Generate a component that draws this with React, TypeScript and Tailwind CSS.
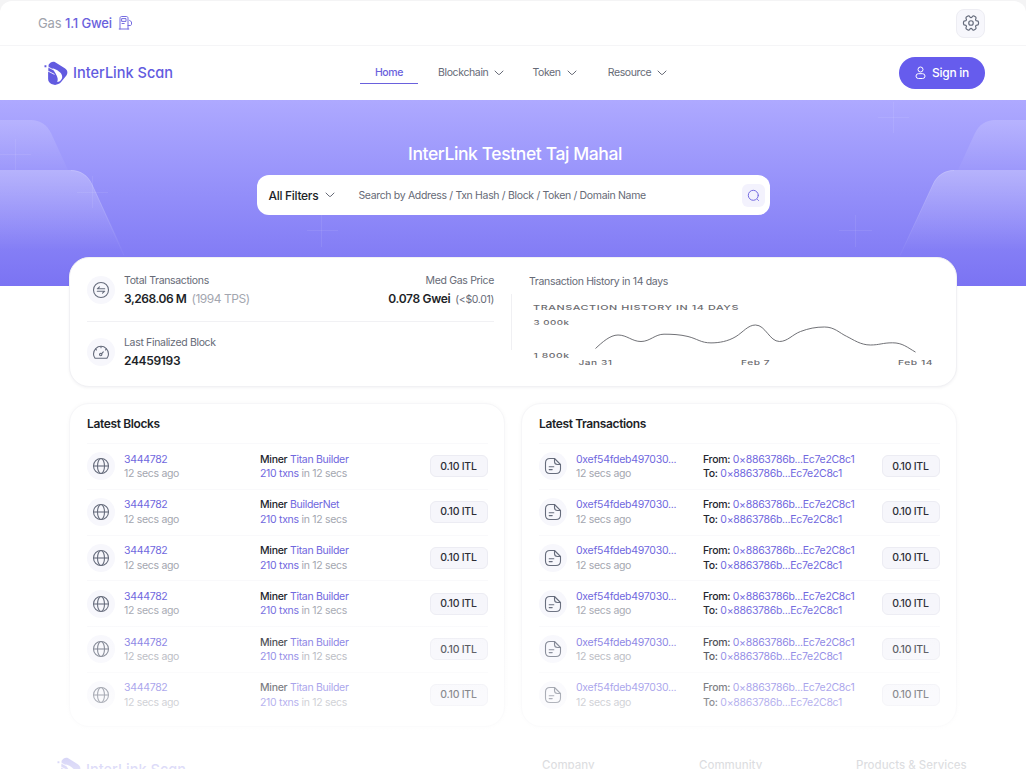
import type { ReactNode } from 'react';

const blocks = [
  { number: '3444782', miner: 'Titan Builder' },
  { number: '3444782', miner: 'BuilderNet' },
  { number: '3444782', miner: 'Titan Builder' },
  { number: '3444782', miner: 'Titan Builder' },
  { number: '3444782', miner: 'Titan Builder' },
  { number: '3444782', miner: 'Titan Builder' },
];

const transactions = Array.from({ length: 6 }, () => ({
  hash: '0xef54fdeb497030...',
  from: '0×8863786b...Ec7e2C8c1',
  to: '0×8863786b...Ec7e2C8c1',
}));

const Chevron = ({ className = '' }: { className?: string }) => (
  <svg className={className} width="10" height="6" viewBox="0 0 10 6" fill="none" stroke="currentColor" strokeLinecap="round" strokeLinejoin="round">
    <path d="M1 1l3.2 3.2c.45.45 1.15.45 1.6 0L9 1" />
  </svg>
);

const GasIcon = () => (
  <svg width="15" height="16" viewBox="0 0 15 16" fill="none" stroke="#756ce0" strokeLinecap="round" strokeLinejoin="round">
    <path d="M2 14V3.200C2 2 2.700 1.500 3.700 1.500h4.600c1 0 1.700.5 1.700 1.700V14M1.200 14h9.600" />
    <path d="M4 3.600h4v2.800H4zM4 8.500h2.200" />
    <path d="M10 10.500h2c.9 0 1.500-.4 1.500-1.300V6.800L11.600 5.500" />
  </svg>
);

const GearIcon = () => (
  <svg width="18" height="18" viewBox="0 0 24 24" fill="none" stroke="#666c7c" strokeWidth="1.600">
    <circle cx="12" cy="12" r="3" />
    <path d="M2 12.880v-1.760c0-1.040.85-1.900 1.900-1.900 1.810 0 2.550-1.280 1.640-2.850-.52-.9-.21-2.070.7-2.590l1.730-.99c.79-.47 1.810-.19 2.280.6l.11.19c.9 1.570 2.380 1.570 3.290 0l.11-.19c.47-.79 1.490-1.070 2.280-.6l1.730.99c.91.52 1.220 1.690.7 2.590-.91 1.570-.17 2.850 1.640 2.850 1.040 0 1.900.85 1.900 1.900v1.760c0 1.040-.85 1.900-1.900 1.900-1.810 0-2.550 1.280-1.640 2.850.52.91.21 2.070-.7 2.590l-1.730.99c-.79.47-1.810.19-2.280-.6l-.11-.19c-.9-1.570-2.380-1.570-3.290 0l-.11.19c-.47.79-1.490 1.070-2.280.6l-1.730-.99c-.91-.52-1.220-1.690-.7-2.590.91-1.570.17-2.850-1.640-2.850-1.050 0-1.900-.86-1.900-1.900z" />
  </svg>
);

const UserIcon = () => (
  <svg width="11" height="14" viewBox="0 0 11 14" fill="none" stroke="#fff">
    <circle cx="5.500" cy="3.500" r="2.500" />
    <rect x="1" y="7.700" width="9" height="4.800" rx="2.400" />
  </svg>
);

const SwapIcon = () => (
  <svg width="18" height="18" viewBox="0 0 18 18" fill="none" stroke="#666c7c" strokeWidth="1.100" strokeLinecap="round" strokeLinejoin="round">
    <circle cx="9" cy="9" r="7.500" />
    <path d="M12.700 7.800H5.300L7.500 5.800M5.300 10.200h7.400l-2.200 2" />
  </svg>
);

const GaugeIcon = () => (
  <svg width="18" height="18" viewBox="0 0 18 18" fill="none" stroke="#666c7c" strokeWidth="1.100" strokeLinecap="round" strokeLinejoin="round">
    <path d="M3 15.200c-.9-1.100-1.500-2.600-1.500-4.300C1.500 6.700 4.900 3.300 9 3.300s7.500 3.400 7.500 7.600c0 1.700-.6 3.200-1.500 4.300z" />
    <path d="M9 3.500v1.300M3.600 6.200l.9.800M14.400 6.200l-.9.800M11.300 8.800l-1.600 1.900" />
    <circle cx="8.700" cy="11.600" r="1.200" />
  </svg>
);

const GlobeIcon = () => (
  <svg width="18" height="18" viewBox="0 0 18 18" fill="none" stroke="#666c7c" strokeWidth="1.100">
    <circle cx="9" cy="9" r="7.500" />
    <ellipse cx="9" cy="9" rx="3.500" ry="7.500" />
    <path d="M1.500 9h15" />
  </svg>
);

const DocIcon = () => (
  <svg width="18" height="18" viewBox="0 0 18 18" fill="none" stroke="#666c7c" strokeWidth="1.100" strokeLinecap="round" strokeLinejoin="round">
    <path d="M10.500 1.500H6C3 1.500 1.500 3 1.500 6v6c0 3 1.500 4.500 4.500 4.500h6c3 0 4.500-1.500 4.500-4.500V7.500z" />
    <path d="M10.500 1.500v3c0 2.200.8 3 3 3h3M5.200 9.800h4.600M5.200 12.600h3" />
  </svg>
);

const Logo = () => (
  <div className="flex items-center text-[#625be0]">
    <svg width="25" height="25" viewBox="0 0 25 25">
      <path
        fill="currentColor"
        d="M4.600 3.800C6.300 1.300 8.800.1 11.200 1.300l9.600 5.900c2.700 1.700 3.400 4.600 1.600 7.200l-5.300 6.700c-2.400 2.900-6.500 3.500-9.600 2-2.300-1.100-3.400-3-3.400-5.300v-6z"
      />
      <path fill="#fff" d="M8.300 7.300c4.500 1.200 9.900 4.300 9.900 8.500 0 2.900-2.500 5.300-5.200 5 1.400-1.700.6-4.200-.5-6.600-1-2.200-2.800-4.500-4.200-6.900z" />
      <path fill="none" stroke="#fff" strokeWidth=".9" d="M2.700 9.400l7.800 4M3.300 5.600l6.200 3.300" />
      <path fill="currentColor" d="M.5 4.300h1.900v1.900H.5z" />
    </svg>
    <svg className="ml-[3px] overflow-visible" width="102" height="20" viewBox="0 0 102 20">
      <text
        x="1"
        y="15.300"
        textLength="100"
        lengthAdjust="spacingAndGlyphs"
        fill="currentColor"
        className="font-['Inter',sans-serif] text-[15px] font-medium [font-feature-settings:'cv11']"
      >
        InterLink Scan
      </text>
    </svg>
  </div>
);

const IconBubble = ({ children }: { children: ReactNode }) => (
  <div className="flex size-7 shrink-0 items-center justify-center rounded-full bg-[#f7f7fc]">{children}</div>
);

const Amount = () => (
  <div className="ml-auto flex h-[22px] w-[58px] items-center justify-center rounded-[6px] border border-[#ececf3] bg-[#f6f6fb] pt-px text-[10.5px] font-medium tracking-[-0.25px] text-[#2b2d35]">
    0.10 ITL
  </div>
);

const ListCard = ({ title, children }: { title: string; children: ReactNode }) => (
  <section className="h-[324px] rounded-[20px] border border-[#f6f6f8] bg-white pr-[16.500px] pl-[17px] shadow-[0_0_4px_rgba(20,20,60,0.03)]">
    <h2 className="flex h-[39px] items-center text-[12px] font-semibold tracking-[-0.37px] text-[#1d1f28]">{title}</h2>
    {children}
  </section>
);

const ListRow = ({ children }: { children: ReactNode }) => (
  <div className="flex h-[45.75px] items-center border-t border-[#f9f9fb] text-[10.5px] leading-[14.5px] tracking-[-0.3px]">{children}</div>
);

const HeroShapes = () => (
  <svg className="absolute inset-0" width="1026" height="187" viewBox="0 0 1026 187" fill="none">
    <defs>
      <linearGradient id="panel" x1="0" y1="70" x2="0" y2="150" gradientUnits="userSpaceOnUse">
        <stop stopColor="#fff" stopOpacity=".28" />
        <stop offset="1" stopColor="#fff" stopOpacity="0" />
      </linearGradient>
      <linearGradient id="backPanel" x1="0" y1="20" x2="0" y2="80" gradientUnits="userSpaceOnUse">
        <stop stopColor="#fff" stopOpacity=".17" />
        <stop offset="1" stopColor="#fff" stopOpacity="0" />
      </linearGradient>
      <linearGradient id="edge" x1="0" y1="70" x2="0" y2="155" gradientUnits="userSpaceOnUse">
        <stop stopColor="#fff" stopOpacity=".15" />
        <stop offset="1" stopColor="#fff" stopOpacity=".04" />
      </linearGradient>
    </defs>
    <path fill="url(#backPanel)" d="M0 20h31c9 0 16 5 20 13l17 37H0z" />
    <path fill="url(#panel)" d="M0 70h71c9 0 17 5 21 14l42 90H0z" />
    <path stroke="url(#edge)" d="M71 70.500c9 0 17 5 21 14l32 71" />
    <path fill="url(#backPanel)" d="M1026 20h-31c-9 0-16 5-20 13l-17 37h68z" />
    <path fill="url(#panel)" d="M1026 70h-72c-9 0-17 5-21 14l-42 90h135z" />
    <path stroke="url(#edge)" d="M954 70.500c-9 0-17 5-21 14l-33 71" />
    <g stroke="#fff" strokeOpacity=".08">
      <path d="M0 54.500h31M15.500 39v31M77 92.500h31M92.500 76v32M307 130.500h31M321.500 115v32M839 130.500h33M855.500 115v32M878 17.500h31M893.500 2v31" />
    </g>
  </svg>
);

const HistoryChart = () => (
  <svg width="410" height="72" viewBox="0 0 410 72" className="font-['Inter',sans-serif]" fill="#6b6b70">
    <g fontSize="6.6" fontWeight="500" letterSpacing=".35">
      <text x="4" y="12.300" textLength="206" lengthAdjust="spacingAndGlyphs">TRANSACTION HISTORY IN 14 DAYS</text>
      <text x="4.500" y="27.200" textLength="36" lengthAdjust="spacingAndGlyphs">3 000k</text>
      <text x="4.500" y="60.200" textLength="36" lengthAdjust="spacingAndGlyphs">1 800k</text>
      <text x="49.500" y="67.200" textLength="34" lengthAdjust="spacingAndGlyphs">Jan 31</text>
      <text x="212" y="67.200" textLength="29" lengthAdjust="spacingAndGlyphs">Feb 7</text>
      <text x="369" y="67.200" textLength="35" lengthAdjust="spacingAndGlyphs">Feb 14</text>
    </g>
    <path
      d="M66.500 50.500C73 44.500 81 37 89 37c9 0 14 6.500 23 6.500s14-7.300 23-7.300c8 0 16 .3 24 2.300 9 2.200 13 6.400 23 6.400 8 0 17-1.500 25-6.400 7-4.300 12-11.500 19.500-11.500 10 0 14 16.500 24 16.500 8 0 13-7 21-10s15-4.500 24-4.500c10 0 15 6 22 9.300 7 3.400 14 8.700 24 8.700 9 0 12-2.200 22-2.200s15 4.700 23 9.300"
      fill="none"
      stroke="#606167"
      strokeWidth=".9"
    />
  </svg>
);

export default function App() {
  return (
    <div className="relative h-[769px] w-[1026px] overflow-hidden bg-[#f4f4f5] pt-px font-['Inter',sans-serif] text-[#666a76]">
      <div className="h-[768px] overflow-hidden rounded-t-[12px] bg-white">
        {/* Gas bar */}
        <div className="flex h-[45px] items-center border-b border-[#f5f5f7] pr-[41px] pl-[38px]">
          <p className="mr-[6px] pt-px text-[13px] tracking-[-0.15px] text-[#a0a3ac]">
            Gas <span className="font-medium text-[#6a61dd]">1.1 Gwei</span>
          </p>
          <GasIcon />
          <button className="ml-auto flex size-[29px] items-center justify-center rounded-[8px] border border-[#ededf3] bg-[#f7f7fc]">
            <GearIcon />
          </button>
        </div>

        {/* Main navigation */}
        <header className="flex h-[54px] items-center pr-[41px] pl-11">
          <Logo />
          <nav className="ml-[186px] flex items-center text-[10.5px] tracking-[-0.37px]">
            <a className="flex h-[22px] w-[58px] justify-center border-b border-[#6a61dd] pt-[3px] font-medium text-[#6a61dd]">Home</a>
            <a className="ml-5 flex items-center gap-[6px]">Blockchain <Chevron /></a>
            <a className="ml-7 flex items-center gap-[6px]">Token <Chevron /></a>
            <a className="ml-[31px] flex items-center gap-[6px]">Resource <Chevron /></a>
          </nav>
          <button className="ml-auto flex h-8 w-[86px] items-center justify-center gap-[6px] rounded-full bg-[#665ced] text-[12px] font-medium tracking-[-0.3px] text-white">
            <UserIcon /> Sign in
          </button>
        </header>

        {/* Hero */}
        <section className="relative flex h-[186px] flex-col items-center bg-linear-to-b from-[#aea9ff] to-[#7b73f3]">
          <HeroShapes />
          <h1 className="relative mt-[41px] ml-[4px] text-[17.5px] leading-[26px] font-medium tracking-[-0.4px] whitespace-nowrap text-white">
            InterLink Testnet Taj Mahal
          </h1>
          <div className="relative mt-[8px] flex h-10 w-[513px] items-center rounded-[12px] bg-white pr-[5px] pl-[12px]">
            <span className="pt-[2px] text-[12px] font-medium tracking-[-0.3px] text-[#1d1f28]">All Filters</span>
            <Chevron className="ml-[7px]" />
            <span className="ml-[23px] pt-[2px] text-[10.5px] tracking-[-0.33px]">Search by Address / Txn Hash / Block / Token / Domain Name</span>
            <button className="ml-auto flex size-[23px] items-center justify-center rounded-[6px] bg-[#f3f2fd]">
              <svg width="13" height="13" viewBox="0 0 13 13" fill="none" stroke="#756ce0" strokeLinecap="round">
                <circle cx="6.300" cy="6.300" r="5" />
                <path d="M10.500 10.500l1 1" />
              </svg>
            </button>
          </div>
        </section>

        <main className="relative -mt-[29px] px-[69px]">
          {/* Network stats */}
          <section className="flex h-[130px] rounded-[20px] border border-[#f1f1f4] bg-white px-[17px] tracking-[-0.33px] shadow-[0_1px_3px_rgba(20,20,60,0.05)]">
            <div className="w-[410px]">
              <div className="flex h-16 items-center border-b border-[#f1f1f4]">
                <IconBubble><SwapIcon /></IconBubble>
                <div className="ml-[9px] pt-px">
                  <p className="text-[10.5px] leading-[18px]">Total Transactions</p>
                  <p className="text-[12px] leading-[18px] tracking-[-0.45px] text-[#a3a6af]">
                    <span className="mr-[5px] font-semibold text-[#1d1f28]">3,268.06 M</span>(1994 TPS)
                  </p>
                </div>
                <div className="ml-auto pt-px text-right">
                  <p className="text-[10.5px] leading-[18px]">Med Gas Price</p>
                  <p className="text-[10.5px] leading-[18px]">
                    <span className="mr-[5px] text-[12px] font-semibold text-[#1d1f28]">0.078 Gwei</span>(&lt;$0.01)
                  </p>
                </div>
              </div>
              <div className="flex h-[60px] items-center">
                <IconBubble><GaugeIcon /></IconBubble>
                <div className="ml-[9px]">
                  <p className="text-[10.5px] leading-[18px]">Last Finalized Block</p>
                  <p className="text-[12px] leading-[18px] font-semibold text-[#1d1f28]">24459193</p>
                </div>
              </div>
            </div>
            <div className="mt-9 ml-[17px] h-14 w-px bg-[#f0f0f3]" />
            <div className="ml-[17px] pt-[15px]">
              <p className="text-[10.5px] leading-[18px]">Transaction History in 14 days</p>
              <div className="mt-[7px]"><HistoryChart /></div>
            </div>
          </section>

          {/* Latest activity */}
          <div className="mt-4 grid grid-cols-[436px_436px] gap-4">
            <ListCard title="Latest Blocks">
              {blocks.map((block, index) => (
                <ListRow key={index}>
                  <div className="flex w-[173px] items-center gap-[9px]">
                    <IconBubble><GlobeIcon /></IconBubble>
                    <div className="pt-[1.5px]">
                      <p className="text-[#7067de]">{block.number}</p>
                      <p className="text-[#a3a6af]">12 secs ago</p>
                    </div>
                  </div>
                  <div className="pt-[1.5px]">
                    <p className="text-[#7067de]"><span className="font-medium text-[#23252d]">Miner</span> {block.miner}</p>
                    <p className="text-[#a3a6af]"><span className="text-[#7067de]">210 txns</span> in 12 secs</p>
                  </div>
                  <Amount />
                </ListRow>
              ))}
            </ListCard>
            <ListCard title="Latest Transactions">
              {transactions.map((tx, index) => (
                <ListRow key={index}>
                  <div className="flex w-[164px] items-center gap-[9px]">
                    <IconBubble><DocIcon /></IconBubble>
                    <div className="pt-[1.5px]">
                      <p className="tracking-[-0.26px] text-[#7067de]">{tx.hash}</p>
                      <p className="text-[#a3a6af]">12 secs ago</p>
                    </div>
                  </div>
                  <div className="pt-[1.5px] text-[#7067de]">
                    <p><span className="font-medium text-[#23252d]">From:</span> {tx.from}</p>
                    <p><span className="font-medium text-[#23252d]">To:</span> {tx.to}</p>
                  </div>
                  <Amount />
                </ListRow>
              ))}
            </ListCard>
          </div>
        </main>

        {/* Footer */}
        <footer className="mt-[30px] flex items-start pl-[57px] text-[11.5px] font-medium">
          <Logo />
          <span className="ml-[355px] w-[157px]">Company</span>
          <span className="w-[157px]">Community</span>
          <span>Products &amp; Services</span>
        </footer>
      </div>

      {/* Bottom fade */}
      <div className="pointer-events-none absolute inset-x-0 bottom-0 h-[170px] bg-linear-to-b from-white/0 to-white/80" />
    </div>
  );
}
